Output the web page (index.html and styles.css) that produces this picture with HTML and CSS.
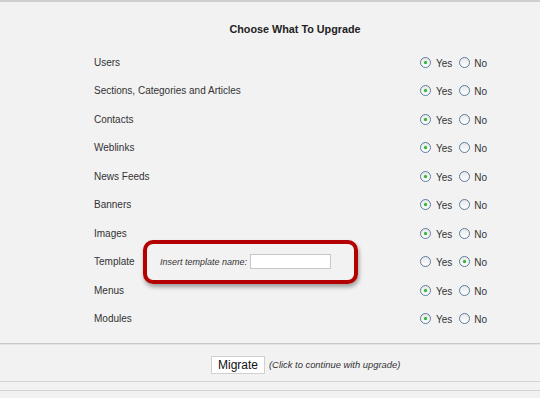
FILE: index.html
```html
<!DOCTYPE html>
<html lang="en">
<head>
  <meta charset="UTF-8">
  <title>Choose What To Upgrade</title>
  <link rel="stylesheet" href="styles.css">
</head>
<body>

<div class="page">
  <h2 class="title">Choose What To Upgrade</h2>

  <div class="options">
    <div class="row"><div class="label">Users</div><div class="choice"><span class="radio on"></span>Yes<span class="radio no"></span>No</div></div>
    <div class="row"><div class="label">Sections, Categories and Articles</div><div class="choice"><span class="radio on"></span>Yes<span class="radio no"></span>No</div></div>
    <div class="row"><div class="label">Contacts</div><div class="choice"><span class="radio on"></span>Yes<span class="radio no"></span>No</div></div>
    <div class="row"><div class="label">Weblinks</div><div class="choice"><span class="radio on"></span>Yes<span class="radio no"></span>No</div></div>
    <div class="row"><div class="label">News Feeds</div><div class="choice"><span class="radio on"></span>Yes<span class="radio no"></span>No</div></div>
    <div class="row"><div class="label">Banners</div><div class="choice"><span class="radio on"></span>Yes<span class="radio no"></span>No</div></div>
    <div class="row"><div class="label">Images</div><div class="choice"><span class="radio on"></span>Yes<span class="radio no"></span>No</div></div>
    <div class="row">
      <div class="label">
        <span class="tpl-name">Template</span>
        <div class="highlight">
          <span class="hint">Insert template name:</span>
          <span class="text-input"></span>
        </div>
      </div>
      <div class="choice"><span class="radio"></span>Yes<span class="radio no on"></span>No</div>
    </div>
    <div class="row"><div class="label">Menus</div><div class="choice"><span class="radio on"></span>Yes<span class="radio no"></span>No</div></div>
    <div class="row"><div class="label">Modules</div><div class="choice"><span class="radio on"></span>Yes<span class="radio no"></span>No</div></div>
  </div>

  <div class="actions">
    <span class="button">Migrate</span>
    <span class="note">(Click to continue with upgrade)</span>
  </div>
  <div class="footer-line"></div>
</div>

</body>
</html>
```

FILE: styles.css
```css
/* Base styles */
body {
  margin: 0;
  font-family: 'Liberation Sans', Arial, sans-serif;
  background: #f2f2f2;
  color: #333;
}

.page {
  border-top: 2px solid #cfcfcf;
  height: 396px;
}

.title {
  margin: 0;
  padding: 21px 0 0 180px;
  text-align: center;
  font-size: 10.8px;
  font-weight: bold;
  color: #222;
  width: 230px;
}

.options {
  padding: 13px 0 10px 94px;
}

.row {
  display: flex;
  align-items: center;
  height: 28.5px;
  font-size: 10px;
}

.label {
  width: 326px;
  display: flex;
  align-items: center;
}

.tpl-name {
  width: 49px;
}

/* red annotation box round the template field */
.highlight {
  display: flex;
  align-items: center;
  box-sizing: border-box;
  width: 215px;
  height: 44px;
  margin: -8px 0;
  padding-left: 13px;
  border: 4px solid #b30000;
  border-radius: 10px;
  box-shadow: 1px 3px 4px rgba(0, 0, 0, 0.35);
}

.hint {
  font-style: italic;
  font-size: 9px;
  color: #333;
}

.text-input {
  display: inline-block;
  width: 79px;
  height: 13px;
  margin-left: 3px;
  background: #fff;
  border: 1px solid #c8c8c8;
}

.choice {
  display: flex;
  align-items: center;
  font-size: 10px;
  padding-top: 2px;
}

.radio {
  width: 9px;
  height: 9px;
  border: 1px solid #5b7da0;
  border-radius: 50%;
  background: linear-gradient(to bottom, #e8e8e8, #ffffff);
  margin-right: 5px;
  position: relative;
  top: -1px;
}

.radio.no {
  margin-left: 7px;
  margin-right: 4px;
}

.radio.on::after {
  content: "";
  position: absolute;
  left: 3px;
  top: 3px;
  width: 3px;
  height: 3px;
  border-radius: 50%;
  background: #2fb52f;
  box-shadow: 0 0 1px #5ccf5c;
}

.actions {
  border-top: 1px solid #c9c9c9;
  border-bottom: 1px solid #d3d3d3;
  box-shadow: inset 0 1px 0 #e4e4e4;
  height: 37px;
  display: flex;
  align-items: center;
  padding-left: 211px;
}

.button {
  display: inline-block;
  box-sizing: border-box;
  width: 54px;
  height: 18px;
  line-height: 16px;
  text-align: center;
  background: #fff;
  border: 1px solid #d0d0d0;
  font-size: 12px;
  color: #111;
  margin-top: 4px;
}

.note {
  font-style: italic;
  font-size: 9.4px;
  margin-left: 4px;
  margin-top: 4px;
}

.footer-line {
  margin-top: 8px;
  border-top: 1px solid #d3d3d3;
}
```
